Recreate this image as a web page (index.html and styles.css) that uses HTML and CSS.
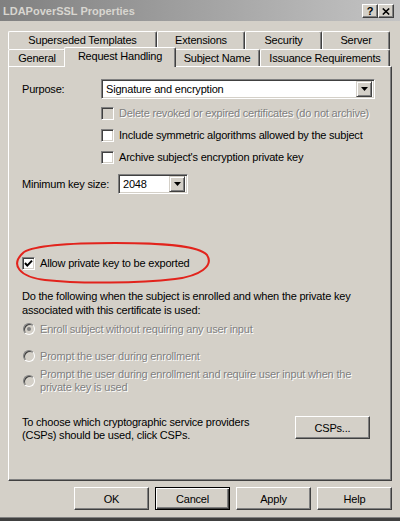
FILE: index.html
```html
<!DOCTYPE html>
<html>
<head>
  <title>LDAPoverSSL Properties</title>
  <link rel="stylesheet" href="styles.css">
</head>
<body>
  <div class="window">
    <div class="titlebar">
      <span class="title">LDAPoverSSL Properties</span>
      <div class="caption-buttons">
        <span class="cap-btn">?</span>
        <span class="cap-btn">
          <svg width="8" height="7" viewBox="0 0 8 7"><path d="M0.8 0.5 L7.2 6.5 M7.2 0.5 L0.8 6.5" stroke="#000" stroke-width="1.6"/></svg>
        </span>
      </div>
    </div>

    <div class="tabs">
      <div class="tab-row back">
        <div class="tab t-superseded">Superseded Templates</div>
        <div class="tab t-extensions">Extensions</div>
        <div class="tab t-security">Security</div>
        <div class="tab t-server">Server</div>
      </div>
      <div class="tab-row front">
        <div class="tab t-general">General</div>
        <div class="tab t-request selected">Request Handling</div>
        <div class="tab t-subject">Subject Name</div>
        <div class="tab t-issuance">Issuance Requirements</div>
      </div>
    </div>

    <div class="panel">
      <div class="field-row">
        <span class="field-label purpose-label">Purpose:</span>
        <div class="combo combo-purpose">
          <span class="combo-text">Signature and encryption</span>
          <span class="drop-btn"><svg width="7" height="4" viewBox="0 0 7 4"><polygon points="0,0 7,0 3.5,4" fill="#000"/></svg></span>
        </div>
      </div>

      <div class="check-list">
        <div class="check disabled"><span class="box"></span><span>Delete revoked or expired certificates (do not archive)</span></div>
        <div class="check"><span class="box"></span><span>Include symmetric algorithms allowed by the subject</span></div>
        <div class="check"><span class="box"></span><span>Archive subject's encryption private key</span></div>
      </div>

      <div class="field-row key-row">
        <span class="field-label key-label">Minimum key size:</span>
        <div class="combo combo-key">
          <span class="combo-text">2048</span>
          <span class="drop-btn"><svg width="7" height="4" viewBox="0 0 7 4"><polygon points="0,0 7,0 3.5,4" fill="#000"/></svg></span>
        </div>
      </div>

      <div class="check allow">
        <span class="box"><svg width="11" height="11" viewBox="0 0 11 11"><polyline points="2,5 4.3,7.6 9,2.6" fill="none" stroke="#000" stroke-width="2"/></svg></span>
        <span>Allow private key to be exported</span>
      </div>

      <p class="note">Do the following when the subject is enrolled and when the private key<br>associated with this certificate is used:</p>

      <div class="radio disabled r-first"><span class="dot on"></span><span>Enroll subject without requiring any user input</span></div>
      <div class="radio disabled r-second"><span class="dot"></span><span>Prompt the user during enrollment</span></div>
      <div class="radio disabled r-third"><span class="dot"></span><span>Prompt the user during enrollment and require user input when the<br>private key is used</span></div>

      <div class="csp-row">
        <p class="csp-text">To choose which cryptographic service providers<br>(CSPs) should be used, click CSPs.</p>
        <button class="btn">CSPs...</button>
      </div>
    </div>

    <div class="buttons">
      <button class="btn">OK</button>
      <button class="btn default">Cancel</button>
      <button class="btn">Apply</button>
      <button class="btn">Help</button>
    </div>

    <svg class="annotation" width="400" height="521" viewBox="0 0 400 521">
      <path d="M24 252 C36 245 72 243 115 243 C160 243 198 245 207 255 C214 266 200 276 175 279 C140 283 80 284 45 280 C20 277 9 265 24 252" fill="none" stroke="#e2231c" stroke-width="2"/>
    </svg>
  </div>
</body>
</html>
```

FILE: styles.css
```css
body {
  margin: 0;
  background: #d4d0c8;
  color: #000;
  font-family: "Liberation Sans", Arial, sans-serif;
  font-size: 11px;
  letter-spacing: -0.2px;
}
.window {
  position: relative;
  width: 400px;
  height: 521px;
  box-sizing: border-box;
  background: #d4d0c8;
  border-bottom: 3px solid #404040;
  box-shadow: inset 0 -1px 0 #808080;
  overflow: hidden;
}

/* title bar */
.titlebar {
  height: 21px;
  display: flex;
  align-items: center;
  justify-content: space-between;
  padding: 0 6px 0 3px;
  background: linear-gradient(to right, #808080, #c4c4c4);
}
.title {
  font-weight: bold;
  color: #d8d6d0;
  letter-spacing: 0;
}
.caption-buttons {
  display: flex;
  margin-top: 1px;
}
.cap-btn {
  width: 16px;
  height: 14px;
  box-sizing: border-box;
  display: flex;
  align-items: center;
  justify-content: center;
  background: #d4d0c8;
  border: 1px solid;
  border-color: #fff #404040 #404040 #fff;
  box-shadow: inset -1px -1px #808080;
  font-weight: bold;
  letter-spacing: 0;
}

/* tabs */
.tabs {
  margin-top: 10px;
  padding-left: 8px;
}
.tab-row {
  display: flex;
  height: 18px;
}
.tab-row.front {
  height: 17px;
}
.tab {
  box-sizing: border-box;
  border-top: 1px solid #fff;
  border-left: 1px solid #fff;
  border-right: 1px solid #404040;
  box-shadow: inset -1px 0 #808080;
  border-radius: 2px 2px 0 0;
  background: #d4d0c8;
  text-align: center;
  line-height: 16px;
  white-space: nowrap;
}
.t-superseded { width: 149px; }
.t-extensions { width: 88px; }
.t-security { width: 77px; }
.t-server { width: 68px; }
.t-general { width: 58px; }
.t-request { width: 112px; }
.t-subject { width: 86px; }
.t-issuance { width: 130px; }
.tab.selected {
  position: relative;
  z-index: 2;
  height: 20px;
  margin: -2px -2px 0 -2px;
}

/* page panel */
.panel {
  margin-left: 8px;
  width: 384px;
  height: 415px;
  box-sizing: border-box;
  border: 1px solid;
  border-color: #fff #404040 #404040 #fff;
  box-shadow: inset -1px -1px #808080;
  padding: 12px 0 0 13px;
}
.field-row {
  display: flex;
  align-items: center;
  height: 20px;
}
.purpose-label { width: 79px; }
.key-label { width: 96px; }
.key-row { margin-top: 6px; }

.combo {
  height: 20px;
  box-sizing: border-box;
  display: flex;
  align-items: center;
  padding: 2px;
  background: #fff;
  border: 1px solid;
  border-color: #808080 #fff #fff #808080;
  box-shadow: inset 1px 1px #404040, inset -1px -1px #d4d0c8;
}
.combo-purpose { width: 274px; }
.combo-key { width: 70px; }
.combo-text {
  padding-left: 2px;
}
.drop-btn {
  margin-left: auto;
  width: 16px;
  height: 16px;
  box-sizing: border-box;
  display: flex;
  align-items: center;
  justify-content: center;
  background: #d4d0c8;
  border: 1px solid;
  border-color: #d4d0c8 #404040 #404040 #d4d0c8;
  box-shadow: inset 1px 1px #fff, inset -1px -1px #808080;
}

/* checkboxes */
.check-list {
  margin: 3px 0 0 79px;
}
.check {
  display: flex;
  align-items: center;
  height: 22px;
  white-space: nowrap;
}
.box {
  width: 13px;
  height: 13px;
  box-sizing: border-box;
  margin-right: 5px;
  background: #fff;
  border: 1px solid;
  border-color: #808080 #fff #fff #808080;
  box-shadow: inset 1px 1px #404040, inset -1px -1px #d4d0c8;
}
.box svg {
  display: block;
}
.check.disabled {
  color: #808080;
  text-shadow: 1px 1px 0 #fff;
}
.check.disabled .box {
  background: #d4d0c8;
}
.allow {
  margin-top: 58px;
}

.note {
  margin: 15px 0 0;
  line-height: 14px;
}

/* radio buttons */
.radio {
  display: flex;
  align-items: center;
  height: 22px;
  padding-left: 1px;
  white-space: nowrap;
}
.radio.disabled {
  color: #808080;
  text-shadow: 1px 1px 0 #fff;
}
.r-first { margin-top: 1px; }
.r-second { margin-top: 5px; }
.r-third {
  margin-top: 1px;
  height: auto;
  line-height: 13px;
}
.dot {
  position: relative;
  flex: none;
  width: 12px;
  height: 12px;
  box-sizing: border-box;
  margin-right: 5px;
  border-radius: 50%;
  background: #d4d0c8;
  border: 1px solid;
  border-color: #808080 #fff #fff #808080;
  box-shadow: inset 1px 1px #404040, inset -1px -1px #d4d0c8;
}
.dot.on::after {
  content: "";
  position: absolute;
  left: 3px;
  top: 3px;
  width: 4px;
  height: 4px;
  border-radius: 50%;
  background: #808080;
}

/* CSP row */
.csp-row {
  display: flex;
  justify-content: space-between;
  align-items: flex-start;
  margin-top: 22px;
  padding-right: 21px;
}
.csp-text {
  margin: 0;
  line-height: 13px;
}

/* buttons */
.btn {
  width: 75px;
  height: 23px;
  padding: 0;
  font: inherit;
  letter-spacing: inherit;
  color: #000;
  background: #d4d0c8;
  border: 1px solid;
  border-color: #fff #404040 #404040 #fff;
  box-shadow: inset -1px -1px #808080;
}
.btn.default {
  border-color: #000;
  box-shadow: inset 1px 1px #fff, inset -1px -1px #404040, inset -2px -2px #808080;
}
.buttons {
  display: flex;
  justify-content: flex-end;
  gap: 6px;
  margin-top: 6px;
  padding-right: 8px;
}

.annotation {
  position: absolute;
  left: 0;
  top: 0;
  pointer-events: none;
}
```
